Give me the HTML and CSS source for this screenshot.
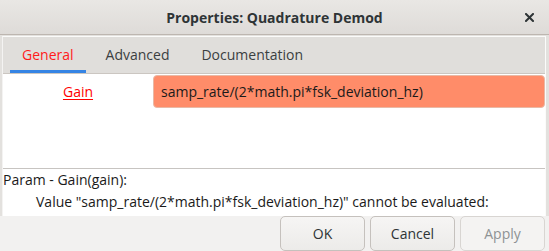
FILE: index.html
```html
<!DOCTYPE html>
<html>
<head>
<meta charset="utf-8">
<link rel="stylesheet" href="styles.css">
</head>
<body>
<div class="window">
  <header class="titlebar">
    <span class="spacer"></span>
    <h1 class="title">Properties: Quadrature Demod</h1>
    <span class="close-wrap">
      <svg class="close" width="9" height="9" viewBox="0 0 9 9"><path d="M1 1 L8 8 M8 1 L1 8" stroke="#2e3436" stroke-width="2" stroke-linecap="square"/></svg>
    </span>
  </header>
  <div class="body">
    <div class="panel">
      <nav class="tabs">
        <span class="tab active">General</span>
        <span class="tab">Advanced</span>
        <span class="tab">Documentation</span>
      </nav>
      <div class="page">
        <div class="param-row">
          <span class="param-label"><a class="label-link">Gain</a></span>
          <span class="entry">samp_rate/(2*math.pi*fsk_deviation_hz)</span>
        </div>
      </div>
      <div class="errors">
        <div class="err-line">Param - Gain(gain):</div>
        <div class="err-line indent">Value "samp_rate/(2*math.pi*fsk_deviation_hz)" cannot be evaluated:</div>
      </div>
    </div>
    <div class="buttons">
      <button class="btn">OK</button>
      <button class="btn">Cancel</button>
      <button class="btn disabled">Apply</button>
    </div>
  </div>
</div>
</body>
</html>
```

FILE: styles.css
```css
html, body {
  margin: 0;
  padding: 0;
}
body {
  width: 549px;
  height: 251px;
  overflow: hidden;
  background: #f2f1f0;
  font-family: "Open Sans", "Noto Sans", sans-serif;
  font-size: 14px;
  color: #1e1e1e;
}
.window {
  display: flex;
  flex-direction: column;
  height: 251px;
}
.titlebar {
  height: 34px;
  border-bottom: 1px solid #bdb6b0;
  background: linear-gradient(#e9e7e4, #dedbd8);
  display: grid;
  grid-template-columns: 1fr auto 1fr;
  align-items: center;
}
.title {
  margin: 0;
  font-size: 14px;
  font-weight: bold;
  color: #2e3436;
  line-height: 20px;
  padding-top: 1px;
}
.close-wrap {
  justify-self: end;
  padding-right: 15px;
  display: flex;
  align-items: center;
}
.close {
  display: block;
}
.body {
  background: #e3e1de;
  padding: 1px 3px 0 2px;
  flex: 1;
  display: flex;
  flex-direction: column;
}
.panel {
  border-top: 1px solid #fbfbfa;
  border-left: 1px solid #f4f3f2;
  border-right: 1px solid #fbfbfa;
  background: #fff;
}
.tabs {
  height: 36px;
  background: #e0dedb;
  border-bottom: 1px solid #cbc6c1;
  display: flex;
  gap: 8px;
  padding-left: 7px;
}
.tab {
  padding: 0 12px;
  display: flex;
  align-items: center;
  height: 33px;
  padding-top: 1px;
  border-bottom: 2px solid transparent;
  color: #3b3f41;
  font-size: 14px;
  box-sizing: content-box;
}
.tab.active {
  color: #ff1a1a;
  height: 32px;
  border-bottom: 3px solid #3584e4;
}
.page {
  height: 95px;
  border-bottom: 1px solid #c7c4c1;
  padding-top: 1px;
  box-sizing: border-box;
}
.param-row {
  display: flex;
  align-items: center;
  height: 33px;
}
.param-label {
  width: 150px;
  text-align: center;
}
.label-link {
  color: #ff0000;
  text-decoration: underline;
  text-underline-offset: 2px;
}
.entry {
  flex: 1;
  height: 33px;
  box-sizing: border-box;
  background: #ff8c69;
  border: 1px solid #e9b9a6;
  border-radius: 4px;
  padding: 0 7px;
  display: flex;
  align-items: center;
  color: #1a1a1a;
  font-size: 14px;
}
.errors {
  height: 47px;
  box-sizing: border-box;
  padding-left: 0;
  background: #fff;
}
.err-line {
  line-height: 22px;
  white-space: nowrap;
  color: #1a1a1a;
}
.err-line.indent {
  padding-left: 33px;
}
.buttons {
  display: flex;
  justify-content: flex-end;
  gap: 5px;
  background: #f2f1f0;
  margin: 0 -3px 0 -2px;
  padding: 0 4px 0 0;
  flex: 1;
}
.btn {
  width: 85px;
  height: 35px;
  box-sizing: border-box;
  border: 1px solid #c5c1bd;
  border-radius: 5px;
  background: linear-gradient(#f6f5f4, #ecebe9);
  font-family: "Open Sans", "Noto Sans", sans-serif;
  font-size: 14px;
  color: #2e3436;
  padding: 0;
}
.btn.disabled {
  color: #8e9294;
  border-color: #d8d5d2;
  background: #f4f3f2;
}
```
